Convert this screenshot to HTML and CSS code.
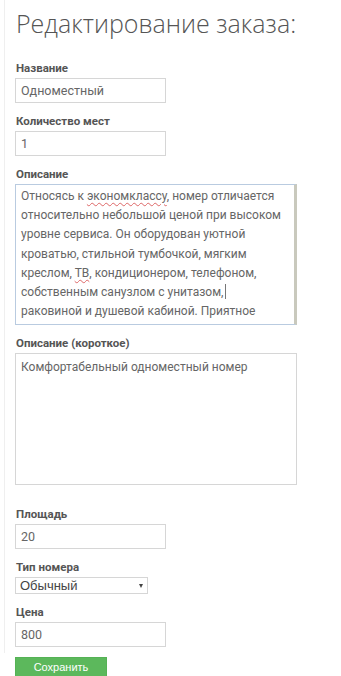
FILE: index.html
```html
<!DOCTYPE html>
<html lang="ru">
<head>
    <meta charset="UTF-8">
    <meta name="viewport" content="width=device-width, initial-scale=1.0">
    <title>Редактирование заказа</title>
    <link rel="stylesheet" href="styles.css">
</head>
<body>
    <form class="order-form">
        <div class="order-panel">
            <h1 class="order-title">Редактирование заказа:</h1>

            <div class="order-field">
                <label class="order-label">Название</label>
                <input class="order-input" type="text" value="Одноместный">
            </div>

            <div class="order-field">
                <label class="order-label">Количество мест</label>
                <input class="order-input" type="text" value="1">
            </div>

            <div class="order-field">
                <label class="order-label">Описание</label>
                <div class="order-textarea order-textarea-focus">Относясь к <span class="spell">экономклассу</span>, номер отличается<br>относительно небольшой ценой при высоком<br>уровне сервиса. Он оборудован уютной<br>кроватью, стильной тумбочкой, мягким<br>креслом, <span class="spell">ТВ</span>, кондиционером, телефоном,<br>собственным санузлом с унитазом,<span class="caret"></span><br>раковиной и душевой кабиной. Приятное</div>
            </div>

            <div class="order-field order-field-wide">
                <label class="order-label">Описание (короткое)</label>
                <div class="order-textarea order-textarea-short">Комфортабельный одноместный номер</div>
            </div>

            <div class="order-field">
                <label class="order-label">Площадь</label>
                <input class="order-input" type="text" value="20">
            </div>

            <div class="order-field">
                <label class="order-label">Тип номера</label>
                <div class="order-select">
                    <span>Обычный</span>
                    <span class="order-select-arrow"></span>
                </div>
            </div>

            <div class="order-field order-field-last">
                <label class="order-label">Цена</label>
                <input class="order-input" type="text" value="800">
            </div>
        </div>

        <div class="order-actions">
            <button class="order-save" type="button">Сохранить</button>
        </div>
    </form>
</body>
</html>
```

FILE: styles.css
```css
*, *:before, *:after {
    box-sizing: border-box;
}

body {
    margin: 0;
    background: #fff;
    font-family: "Open Sans", "Liberation Sans", sans-serif;
    color: #555;
}

.order-form {
    display: flex;
    flex-direction: column;
}

.order-panel {
    margin-left: 4px;
    border-left: 1px solid #efefef;
    padding: 8px 0 6px 10px;
    display: flex;
    flex-direction: column;
}

.order-title {
    margin: 0 0 22px 1px;
    font-size: 25px;
    font-weight: 300;
    line-height: 30px;
    color: #555;
}

.order-field {
    display: flex;
    flex-direction: column;
    align-items: flex-start;
    margin-bottom: 10px;
}

.order-field-wide {
    margin-bottom: 21px;
}

.order-field-last {
    margin-bottom: 0;
}

.order-label {
    margin: 0 0 2px 1px;
    font-family: Roboto, "Liberation Sans", sans-serif;
    font-size: 11.5px;
    font-weight: 700;
    line-height: 16px;
    color: #555;
}

.order-input {
    width: 151px;
    height: 25px;
    margin: 0;
    padding: 0 5px;
    border: 1px solid #d6d6d6;
    font-family: Roboto, "Liberation Sans", sans-serif;
    font-size: 12.5px;
    color: #666;
    background: #fff;
    outline: none;
}

.order-textarea {
    width: 282px;
    height: 141px;
    padding: 2px 5px;
    border: 1px solid #d6d6d6;
    font-family: Roboto, "Liberation Sans", sans-serif;
    font-size: 12px;
    line-height: 19.2px;
    color: #666;
    white-space: nowrap;
    overflow: hidden;
}

.order-textarea-focus {
    border-color: #b9cbe0;
    border-right: 3px solid #c9c9bd;
}

.order-textarea-short {
    height: 132px;
    padding-top: 4px;
}

.spell {
    text-decoration: underline wavy #d66;
    text-decoration-thickness: 1px;
    text-underline-offset: 2px;
}

.caret {
    display: inline-block;
    width: 1px;
    height: 15px;
    margin-left: 2px;
    vertical-align: -3px;
    background: #777;
}

.order-select {
    display: flex;
    align-items: center;
    justify-content: space-between;
    width: 133px;
    height: 17px;
    padding: 0 4px;
    border: 1px solid #d6d6d6;
    font-family: "Liberation Sans", Arial, sans-serif;
    font-size: 13px;
    color: #444;
}

.order-select-arrow {
    width: 0;
    height: 0;
    border-left: 2px solid transparent;
    border-right: 2px solid transparent;
    border-top: 4px solid #444;
}

.order-actions {
    display: flex;
    padding: 4px 0 0 15px;
}

.order-save {
    width: 92px;
    height: 26px;
    padding: 0 0 6px;
    border: 1px solid #55b255;
    background: #5cb85c;
    color: #fff;
    font-family: "Liberation Sans", Arial, sans-serif;
    font-size: 11px;
}
```
